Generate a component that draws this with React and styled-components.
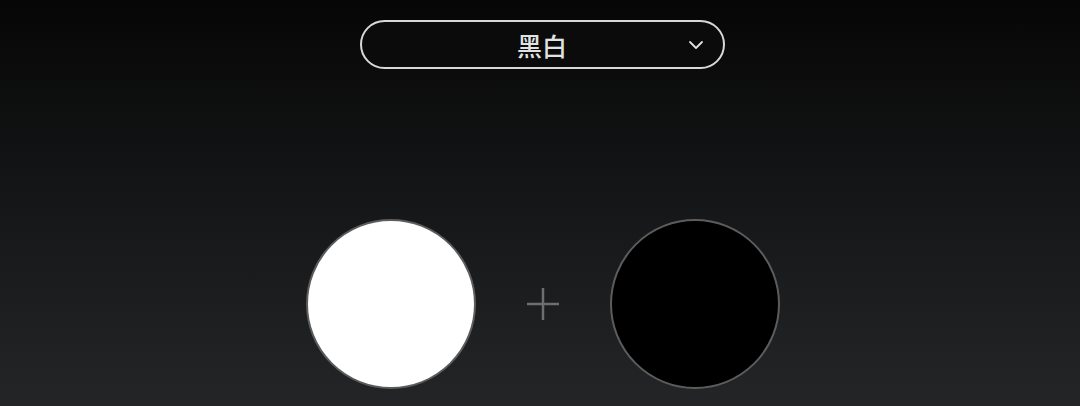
import React from "react";
import styled, { createGlobalStyle } from "styled-components";

const Global = createGlobalStyle`
  html, body { margin: 0; padding: 0; }
  body { font-family: "Noto Sans", "Noto Sans CJK SC", sans-serif; }
`;

const Page = styled.div`
  width: 1080px;
  height: 406px;
  background: linear-gradient(180deg, #060606 0%, #141516 45%, #242526 100%);
  display: flex;
  flex-direction: column;
  align-items: center;
  padding-top: 20px;
  box-sizing: border-box;
  overflow: hidden;
`;

const Select = styled.button`
  position: relative;
  width: 365px;
  height: 49px;
  box-sizing: border-box;
  border: 2px solid #d8d8d8;
  border-radius: 25px;
  background: #0b0b0b;
  color: #e2e2e2;
  font-family: "Noto Sans CJK SC", sans-serif;
  font-size: 25px;
  font-weight: 500;
  display: flex;
  align-items: center;
  justify-content: center;
  padding: 0;
  margin-left: 4px;
`;

const Chevron = styled.svg`
  position: absolute;
  right: 19px;
  top: 50%;
  transform: translateY(-50%);
`;

const Row = styled.div`
  margin-top: 150px;
  display: flex;
  align-items: center;
  gap: 50px;
  margin-left: 5px;
`;

const Swatch = styled.div`
  width: 170px;
  height: 170px;
  border-radius: 50%;
  box-sizing: border-box;
  border: 2px solid #5c5c5c;
  background: ${(p) => p.$color};
`;

const Plus = styled.svg`
  display: block;
`;

export default function App() {
  return (
    <>
      <Global />
      <Page>
        <Select>
          黑白
          <Chevron width="16" height="10" viewBox="0 0 16 10">
            <path d="M2 2 L8 8 L14 2" fill="none" stroke="#e0e0e0" strokeWidth="1.8" strokeLinecap="round" strokeLinejoin="round" />
          </Chevron>
        </Select>
        <Row>
          <Swatch $color="#ffffff" />
          <Plus width="34" height="34" viewBox="0 0 34 34">
            <path d="M17 1 V33 M1 17 H33" stroke="#6e6e6e" strokeWidth="2.5" />
          </Plus>
          <Swatch $color="#000000" />
        </Row>
      </Page>
    </>
  );
}
